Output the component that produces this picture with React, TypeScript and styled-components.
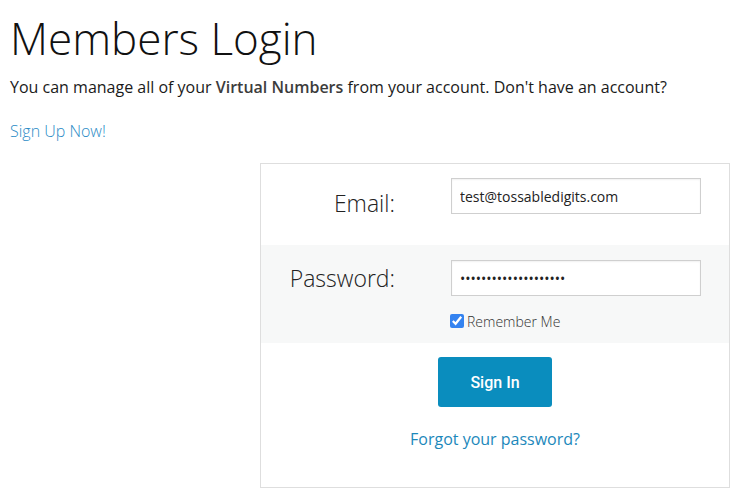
import React from "react";
import styled, { createGlobalStyle } from "styled-components";

const GlobalStyle = createGlobalStyle`
  html, body {
    margin: 0;
    padding: 0;
    background: #fff;
  }
  body {
    font-family: "Open Sans", "Liberation Sans", sans-serif;
    color: #1a1a1a;
  }
`;

const Page = styled.div`
  padding: 0 10px;
`;

const Title = styled.h1`
  margin: 8px 0 0;
  font-size: 44px;
  font-weight: 300;
  line-height: 60px;
  color: #111;
`;

const Intro = styled.p`
  margin: 7px 0 0;
  font-size: 16px;
  line-height: 24px;
  color: #1a1a1a;

  strong {
    font-weight: 600;
    color: #3c3c3c;
  }
`;

const SignUpLink = styled.a`
  display: inline-block;
  margin-top: 20px;
  font-size: 16px;
  font-weight: 300;
  line-height: 24px;
  color: #2a8bc6;
  text-decoration: none;
`;

const LoginBox = styled.form`
  margin: 20px 0 0 250px;
  width: 470px;
  box-sizing: border-box;
  border: 1px solid #dedede;
`;

const Row = styled.div<{ $shaded?: boolean }>`
  display: grid;
  grid-template-columns: 134px 250px;
  column-gap: 56px;
  align-items: start;
  padding: ${(p) => (p.$shaded ? "15px 0 0" : "14px 0 30px")};
  background: ${(p) => (p.$shaded ? "#f7f8f8" : "#fff")};
`;

const Label = styled.label<{ $offset: number }>`
  text-align: right;
  font-size: 23px;
  font-weight: 300;
  line-height: 24px;
  padding-top: ${(p) => p.$offset}px;
  color: #222;
`;

const Input = styled.input`
  box-sizing: border-box;
  width: 250px;
  height: 36px;
  padding: 0 8px;
  border: 1px solid #cfcfcf;
  box-shadow: inset 0 1px 2px rgba(0, 0, 0, 0.06);
  background: #fff;
  font-family: "Open Sans", sans-serif;
  font-size: 14px;
  color: #222;
  outline: none;
`;

const RememberRow = styled.label`
  grid-column: 2;
  display: flex;
  align-items: center;
  gap: 3px;
  height: 44px;
  padding-top: 3px;
  font-size: 14px;
  font-weight: 300;
  color: #333;
  margin-left: -1px;
`;

const CheckBox = styled.input`
  margin: 0;
  width: 14px;
  height: 14px;
  accent-color: #3483f0;
`;

const Actions = styled.div`
  display: flex;
  flex-direction: column;
  align-items: center;
  padding: 14px 0 36px;
`;

const SubmitButton = styled.button`
  width: 114px;
  height: 50px;
  border: none;
  border-radius: 3px;
  background: #0a8dbe;
  color: #fff;
  font-family: Roboto, "Liberation Sans", sans-serif;
  font-size: 16px;
  font-weight: 500;
  cursor: pointer;
`;

const ForgotLink = styled.a`
  margin-top: 20px;
  font-size: 16px;
  line-height: 24px;
  color: #1c88bb;
  text-decoration: none;
`;

export default function App() {
  return (
    <Page>
      <GlobalStyle />
      <Title>Members Login</Title>
      <Intro>
        You can manage all of your <strong>Virtual Numbers</strong> from your
        account. Don't have an account?
      </Intro>
      <SignUpLink href="#">Sign Up Now!</SignUpLink>
      <LoginBox onSubmit={(e) => e.preventDefault()}>
        <Row>
          <Label htmlFor="email" $offset={13}>
            Email:
          </Label>
          <Input id="email" type="text" defaultValue="test@tossabledigits.com" />
        </Row>
        <Row $shaded>
          <Label htmlFor="password" $offset={6}>
            Password:
          </Label>
          <Input id="password" type="password" defaultValue="secretpassword123456" />
          <RememberRow>
            <CheckBox type="checkbox" defaultChecked />
            Remember Me
          </RememberRow>
        </Row>
        <Actions>
          <SubmitButton type="submit">Sign In</SubmitButton>
          <ForgotLink href="#">Forgot your password?</ForgotLink>
        </Actions>
      </LoginBox>
    </Page>
  );
}
